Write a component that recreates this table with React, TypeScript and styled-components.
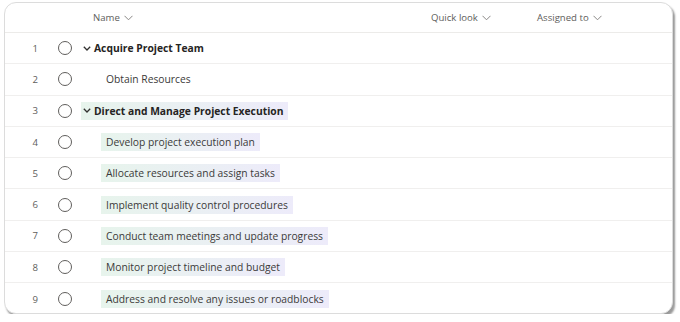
import styled, { createGlobalStyle } from 'styled-components';

const GlobalStyle = createGlobalStyle`
    body {
        margin: 0;
        background: #ffffff;
        font-family: 'Open Sans', 'Liberation Sans', sans-serif;
        color: #323130;
    }
`;

const COLUMNS = '46px 28px 352px 106px 1fr';

const Card = styled.div`
    box-sizing: border-box;
    margin: 2px 0 0 4px;
    width: 669px;
    height: 312px;
    border: 1px solid #dcdcdc;
    border-radius: 12px;
    background: #ffffff;
    box-shadow: 2px 3px 2px rgba(0, 0, 0, 0.4);
    overflow: hidden;
`;

const HeaderRow = styled.div`
    display: grid;
    grid-template-columns: ${COLUMNS};
    align-items: center;
    height: 29px;
    border-bottom: 1px solid #ecebe9;
`;

const HeaderCell = styled.div<{ $pad?: number }>`
    display: flex;
    align-items: center;
    gap: 4px;
    padding-left: ${({ $pad }) => $pad ?? 0}px;
    font-size: 9.6px;
    color: #605e5c;
`;

const Row = styled.div`
    display: grid;
    grid-template-columns: ${COLUMNS};
    align-items: center;
    height: 31.3px;
    box-sizing: border-box;
    border-bottom: 1px solid #f0efee;

    &:last-child {
        border-bottom: none;
    }
`;

const Num = styled.div`
    text-align: right;
    padding-right: 13px;
    font-size: 9.6px;
    color: #605e5c;
`;

const CircleCell = styled.div`
    display: flex;
    justify-content: center;
`;

const Circle = styled.div`
    width: 12px;
    height: 12px;
    border: 1px solid #605e5c;
    border-radius: 50%;
`;

const NameCell = styled.div<{ $indent: boolean }>`
    display: flex;
    padding-left: ${({ $indent }) => ($indent ? 22 : 2)}px;
`;

const Pill = styled.div<{ $group: boolean; $tint: boolean }>`
    display: flex;
    align-items: center;
    gap: 3px;
    height: 18px;
    padding: 0 5px 0 ${({ $group }) => ($group ? 2 : 5)}px;
    font-size: 10.3px;
    font-weight: ${({ $group }) => ($group ? 700 : 400)};
    color: ${({ $group }) => ($group ? '#252423' : '#3b3a39')};
    background: ${({ $tint }) =>
        $tint ? 'linear-gradient(90deg, #e7f4ec 0%, #edebfa 100%)' : 'transparent'};
`;

const HeaderChevron = () => (
    <svg width='9' height='6' viewBox='0 0 9 6' fill='none'>
        <path d='M0.5 0.8 L4.5 4.8 L8.5 0.8' stroke='#8a8886' strokeWidth='1' />
    </svg>
);

const GroupChevron = () => (
    <svg width='8' height='5' viewBox='0 0 8 5' fill='none'>
        <path d='M0.8 0.8 L4 4 L7.2 0.8' stroke='#323130' strokeWidth='1.3' />
    </svg>
);

type Task = {
    name: string;
    group?: boolean;
    tint?: boolean;
};

const tasks: Task[] = [
    { name: 'Acquire Project Team', group: true },
    { name: 'Obtain Resources' },
    { name: 'Direct and Manage Project Execution', group: true, tint: true },
    { name: 'Develop project execution plan', tint: true },
    { name: 'Allocate resources and assign tasks', tint: true },
    { name: 'Implement quality control procedures', tint: true },
    { name: 'Conduct team meetings and update progress', tint: true },
    { name: 'Monitor project timeline and budget', tint: true },
    { name: 'Address and resolve any issues or roadblocks', tint: true },
];

const App = () => (
    <>
        <GlobalStyle />
        <Card>
            <HeaderRow>
                <div />
                <div />
                <HeaderCell $pad={14}>
                    Name <HeaderChevron />
                </HeaderCell>
                <HeaderCell>
                    Quick look <HeaderChevron />
                </HeaderCell>
                <HeaderCell>
                    Assigned to <HeaderChevron />
                </HeaderCell>
            </HeaderRow>
            {tasks.map((task, i) => (
                <Row key={task.name}>
                    <Num>{i + 1}</Num>
                    <CircleCell>
                        <Circle />
                    </CircleCell>
                    <NameCell $indent={!task.group}>
                        <Pill $group={!!task.group} $tint={!!task.tint}>
                            {task.group && <GroupChevron />}
                            {task.name}
                        </Pill>
                    </NameCell>
                    <div />
                    <div />
                </Row>
            ))}
        </Card>
    </>
);

export default App;
